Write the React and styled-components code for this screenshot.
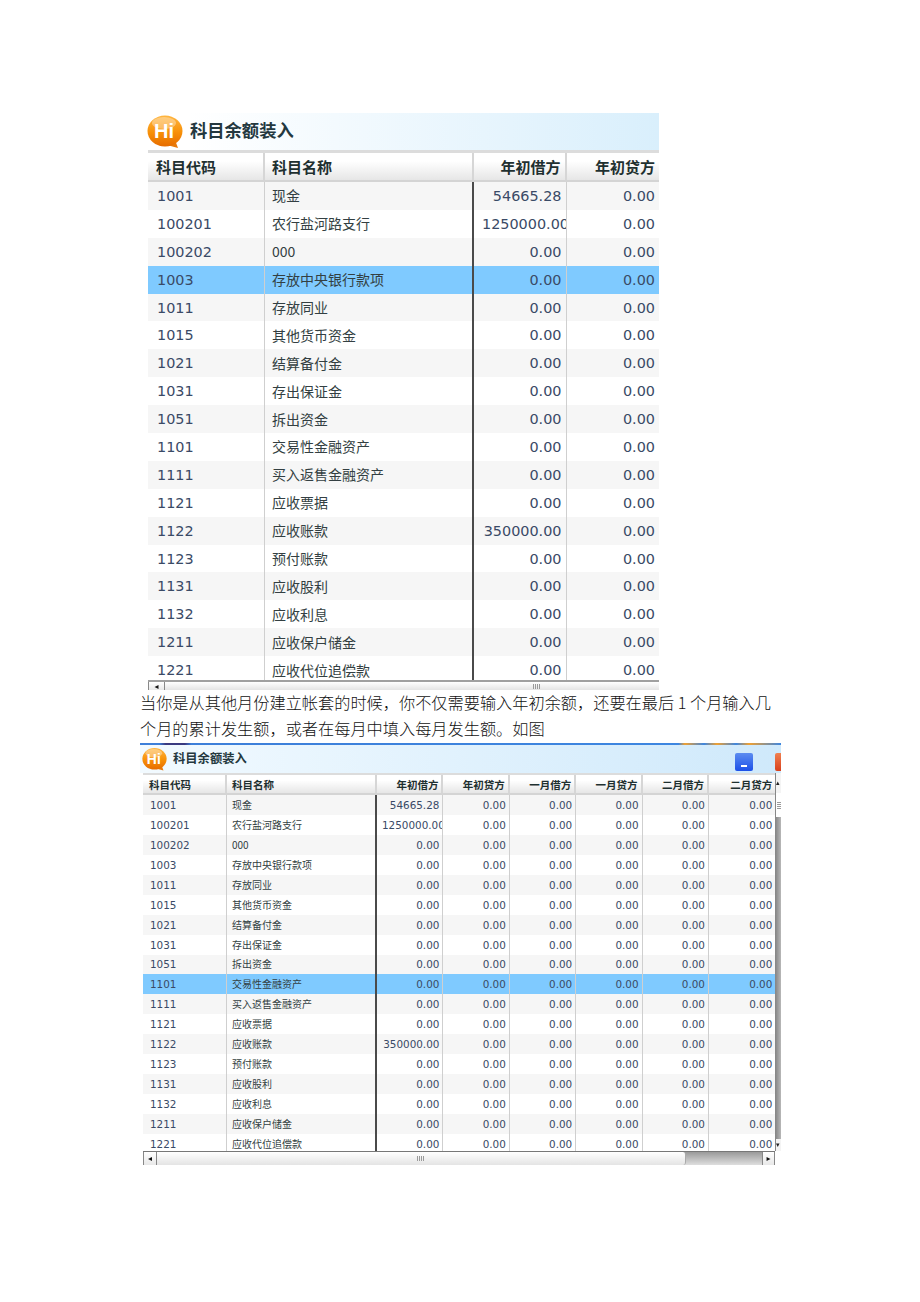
import React from "react";
import styled, { createGlobalStyle } from "styled-components";

const ACCOUNTS = [
  ["1001", "现金", "54665.28"],
  ["100201", "农行盐河路支行", "1250000.00"],
  ["100202", "000", "0.00"],
  ["1003", "存放中央银行款项", "0.00"],
  ["1011", "存放同业", "0.00"],
  ["1015", "其他货币资金", "0.00"],
  ["1021", "结算备付金", "0.00"],
  ["1031", "存出保证金", "0.00"],
  ["1051", "拆出资金", "0.00"],
  ["1101", "交易性金融资产", "0.00"],
  ["1111", "买入返售金融资产", "0.00"],
  ["1121", "应收票据", "0.00"],
  ["1122", "应收账款", "350000.00"],
  ["1123", "预付账款", "0.00"],
  ["1131", "应收股利", "0.00"],
  ["1132", "应收利息", "0.00"],
  ["1211", "应收保户储金", "0.00"],
  ["1221", "应收代位追偿款", "0.00"],
];

const CJK = `"Noto Sans CJK SC", "DejaVu Sans", sans-serif`;
const NUM = `"DejaVu Sans", "Noto Sans CJK SC", sans-serif`;

const GlobalStyle = createGlobalStyle`
  html, body {
    margin: 0;
    background: #fff;
  }
`;

const Page = styled.div`
  min-height: 1302px;
  box-sizing: border-box;
  padding: 113px 0 0 140px;
`;

const Shot = styled.div`
  filter: blur(0.4px);
  overflow: hidden;
`;

const LargeShot = styled(Shot)`
  width: 512px;
  margin-left: 7px;
`;

const WideShot = styled(Shot)`
  width: 641px;
  margin-top: 2px;
`;

const TopStripe = styled.div`
  height: 2px;
  background: linear-gradient(
    90deg,
    #3d7fd9 0,
    #3d7fd9 3%,
    #3a3a80 4%,
    #3a3a80 7%,
    #3d7fd9 8%,
    #3d86e0 84%,
    #f0a030 85%,
    #3d86e0 88%,
    #f0a030 90%,
    #3d86e0 93%,
    #f0a030 95%,
    #3d86e0 100%
  );
`;

const TitleBar = styled.div`
  display: flex;
  align-items: center;
  height: ${(p) => (p.$compact ? "28px" : "37px")};
  padding-left: ${(p) => (p.$compact ? "2px" : "0")};
  background: ${(p) =>
    p.$compact
      ? "linear-gradient(90deg, #f2faff 0, #cfe9fb 100%)"
      : "linear-gradient(90deg, #ffffff 8%, #d9effc 100%)"};
  overflow: hidden;
`;

const Title = styled.h1`
  margin: 0 0 ${(p) => (p.$compact ? "2px" : "4px")} ${(p) => (p.$compact ? "6px" : "7px")};
  font: 700 ${(p) => (p.$compact ? "12.3px" : "17.3px")} ${CJK};
  color: #24383f;
  white-space: nowrap;
`;

const WindowButtons = styled.div`
  display: flex;
  gap: 22px;
  margin-left: auto;
  margin-right: -12px;
  padding-top: 6px;
`;

const WindowButton = styled.div`
  display: flex;
  align-items: flex-end;
  justify-content: center;
  flex: none;
  width: 18px;
  height: 18px;
  padding-bottom: 4px;
  box-sizing: border-box;
  border-radius: 2px;
  background: ${(p) =>
    p.$red
      ? "linear-gradient(180deg, #f08050, #d8401c)"
      : "linear-gradient(180deg, #5c8cf0, #1c50e8)"};

  &::after {
    content: "";
    width: 6px;
    height: 2px;
    background: #fff;
  }
`;

const Grid = styled.div`
  flex: 1;
  min-width: 0;
  border-top: ${(p) => (p.$compact ? "2px" : "3px")} solid #dcdcdc;
`;

const Row = styled.div`
  display: grid;
  grid-template-columns: ${(p) => p.$cols};
  height: ${(p) => p.$height}px;
  background: ${(p) => (p.$selected ? "#7fcaff" : p.$striped ? "#f6f6f6" : "#fff")};
`;

const HeaderRow = styled(Row)`
  background: linear-gradient(180deg, #ffffff 30%, #e6e6e6 100%);
  border-bottom: 2px solid #d4d4d4;
  box-sizing: content-box;
`;

const Cell = styled.div`
  display: flex;
  align-items: center;
  justify-content: ${(p) => (p.$right ? "flex-end" : "flex-start")};
  box-sizing: border-box;
  min-width: 0;
  overflow: hidden;
  white-space: nowrap;
  padding: 0 ${(p) => (p.$compact ? "3px" : "4px")} 0 ${(p) => p.$left || 0}px;
  border-right: 1px solid #cfcfcf;
  font: 400 ${(p) => (p.$compact ? "10.4px" : "14.4px")} ${NUM};
  color: #3a4a66;

  &:last-child {
    border-right: 0;
  }
`;

const NameCell = styled(Cell)`
  font: 400 ${(p) => (p.$compact ? "10px" : "14px")} ${CJK};
  color: #333f42;
  border-right: 2px solid #4a4a4a;
  padding-bottom: 1px;
`;

const HeaderCell = styled(Cell)`
  font: 700 ${(p) => (p.$compact ? "10.5px" : "15px")} ${CJK};
  color: #1f3030;
  border-right: 2px solid #d6d6d6;
`;

const Viewport = styled.div`
  height: ${(p) => p.$height}px;
  overflow: hidden;
`;

const Body = styled.div`
  display: flex;
  padding-left: ${(p) => p.$inset}px;
`;

const VerticalBar = styled.div`
  display: flex;
  flex-direction: column;
  flex: none;
  width: 5px;
  border-left: 1px solid #888;
`;

const VerticalCap = styled.div`
  display: flex;
  align-items: center;
  flex: none;
  height: ${(p) => p.$height}px;
  overflow: hidden;
  background: #f4f4f4;
  color: #222;
  font: 7px ${NUM};
`;

const VerticalThumb = styled.div`
  display: flex;
  align-items: center;
  flex: none;
  height: 24px;
  background: #fff;

  &::after {
    content: "";
    width: 4px;
    height: 7px;
    margin-left: 1px;
    background: repeating-linear-gradient(180deg, #9a9a9a 0 1px, transparent 1px 2px);
  }
`;

const VerticalTrack = styled.div`
  flex: 1;
  background: linear-gradient(90deg, #8a8a8a, #b8b8b8);
`;

const HorizontalBar = styled.div`
  display: flex;
  align-items: stretch;
  height: ${(p) => p.$height}px;
  margin: 0 ${(p) => p.$end || 0}px 0 ${(p) => p.$inset}px;
  overflow: hidden;
  border-top: ${(p) => (p.$plain ? "2px solid #a0a0a0" : "1px solid #777")};
  background: ${(p) => (p.$plain ? "#fff" : "linear-gradient(180deg, #9a9a9a, #dedede)")};
`;

const ArrowButton = styled.div`
  display: flex;
  align-items: center;
  justify-content: center;
  flex: none;
  width: ${(p) => p.$width}px;
  margin-left: ${(p) => (p.$end ? "auto" : "0")};
  background: linear-gradient(180deg, #fff, #e8e8e8);
  border-right: 1px solid #888;
  border-left: 1px solid #888;
  box-sizing: border-box;
  color: #111;
  font: 8px ${NUM};
`;

const Thumb = styled.div`
  display: flex;
  align-items: center;
  justify-content: center;
  flex: 0 0 ${(p) => p.$width};
  box-sizing: border-box;
  background: linear-gradient(180deg, #ffffff, #e4e4e4);
  border-right: 1px solid #aaa;
  border-radius: 0 3px 3px 0;
`;

const Grip = styled.div`
  width: 8px;
  height: 5px;
  background: repeating-linear-gradient(90deg, #9a9a9a 0 1px, transparent 1px 2px);
`;

const Paragraph = styled.p`
  width: 634px;
  margin: -1px 0 0;
  font: 300 16.2px/26px "Noto Sans CJK SC", "Liberation Serif", serif;
  color: #111;
`;

function HiLogo({ size }) {
  return (
    <svg width={size} height={size} viewBox="0 0 36 36" style={{ flex: "none" }}>
      <defs>
        <linearGradient id={`hi-${size}`} x1="0" y1="0" x2="0" y2="1">
          <stop offset="0" stopColor="#ffb640" />
          <stop offset="0.55" stopColor="#f79008" />
          <stop offset="1" stopColor="#e66c00" />
        </linearGradient>
      </defs>
      <path d="M28 26 L31 34 L20 31 Z" fill="#e8790a" />
      <ellipse cx="18" cy="17" rx="17.5" ry="15.5" fill={`url(#hi-${size})`} />
      <ellipse cx="17" cy="9" rx="12" ry="6" fill="#fff" opacity="0.35" />
      <text x="17" y="24" textAnchor="middle" fontFamily="Liberation Sans, sans-serif" fontWeight="700" fontSize="20" fill="#fff">
        Hi
      </text>
    </svg>
  );
}

function AccountGrid({ columns, headers, cols, compact, rowHeight, headHeight, bodyHeight, selected, leftPad }) {
  return (
    <Grid $compact={compact}>
      <HeaderRow $cols={cols} $height={headHeight}>
        {headers.map((h, i) => (
          <HeaderCell key={h + i} $compact={compact} $right={i > 1} $left={leftPad[i < 2 ? i : 2]}>
            {h}
          </HeaderCell>
        ))}
      </HeaderRow>
      <Viewport $height={bodyHeight}>
        {ACCOUNTS.map(([code, name, opening], r) => (
          <Row key={code} $cols={cols} $height={rowHeight} $selected={code === selected} $striped={r % 2 === 0}>
            <Cell $compact={compact} $left={leftPad[0] + 1}>{code}</Cell>
            <NameCell $compact={compact} $left={leftPad[1]}>{name}</NameCell>
            <Cell $compact={compact} $right={opening.length < 10} $left={compact ? 5 : 8}>
              {opening}
            </Cell>
            {Array.from({ length: columns - 3 }, (_, i) => (
              <Cell key={i} $compact={compact} $right>0.00</Cell>
            ))}
          </Row>
        ))}
      </Viewport>
    </Grid>
  );
}

export default function App() {
  return (
    <Page>
      <GlobalStyle />
      <LargeShot>
        <TitleBar>
          <HiLogo size={36} />
          <Title>科目余额装入</Title>
        </TitleBar>
        <Body $inset={1}>
          <AccountGrid
            columns={4}
            headers={["科目代码", "科目名称", "年初借方", "年初贷方"]}
            cols="117px 209px 92.5px 92.5px"
            rowHeight={27.9}
            headHeight={27}
            bodyHeight={498}
            selected="1003"
            leftPad={[8, 7]}
          />
        </Body>
        <HorizontalBar $height={8} $inset={1} $plain>
          <ArrowButton $width={17}>◂</ArrowButton>
          <Thumb $width="744px">
            <Grip />
          </Thumb>
        </HorizontalBar>
      </LargeShot>
      <Paragraph>
        当你是从其他月份建立帐套的时候，你不仅需要输入年初余额，还要在最后 1 个月输入几个月的累计发生额，或者在每月中填入每月发生额。如图
      </Paragraph>
      <WideShot>
        <TopStripe />
        <TitleBar $compact>
          <HiLogo size={25} />
          <Title $compact>科目余额装入</Title>
          <WindowButtons>
            <WindowButton />
            <WindowButton $red />
          </WindowButtons>
        </TitleBar>
        <Body $inset={3}>
          <AccountGrid
            compact
            columns={8}
            headers={["科目代码", "科目名称", "年初借方", "年初贷方", "一月借方", "一月贷方", "二月借方", "二月贷方"]}
            cols="84px 150px repeat(6, 66.4px)"
            rowHeight={19.95}
            headHeight={18}
            bodyHeight={356}
            selected="1101"
            leftPad={[6, 5]}
          />
          <VerticalBar>
            <VerticalCap $height={20}>▴</VerticalCap>
            <VerticalThumb />
            <VerticalTrack />
            <VerticalCap $height={12}>▾</VerticalCap>
          </VerticalBar>
        </Body>
        <HorizontalBar $height={13} $inset={3} $end={6}>
          <ArrowButton $width={14}>◂</ArrowButton>
          <Thumb $width="529px">
            <Grip />
          </Thumb>
          <ArrowButton $width={13} $end>▸</ArrowButton>
        </HorizontalBar>
      </WideShot>
    </Page>
  );
}
